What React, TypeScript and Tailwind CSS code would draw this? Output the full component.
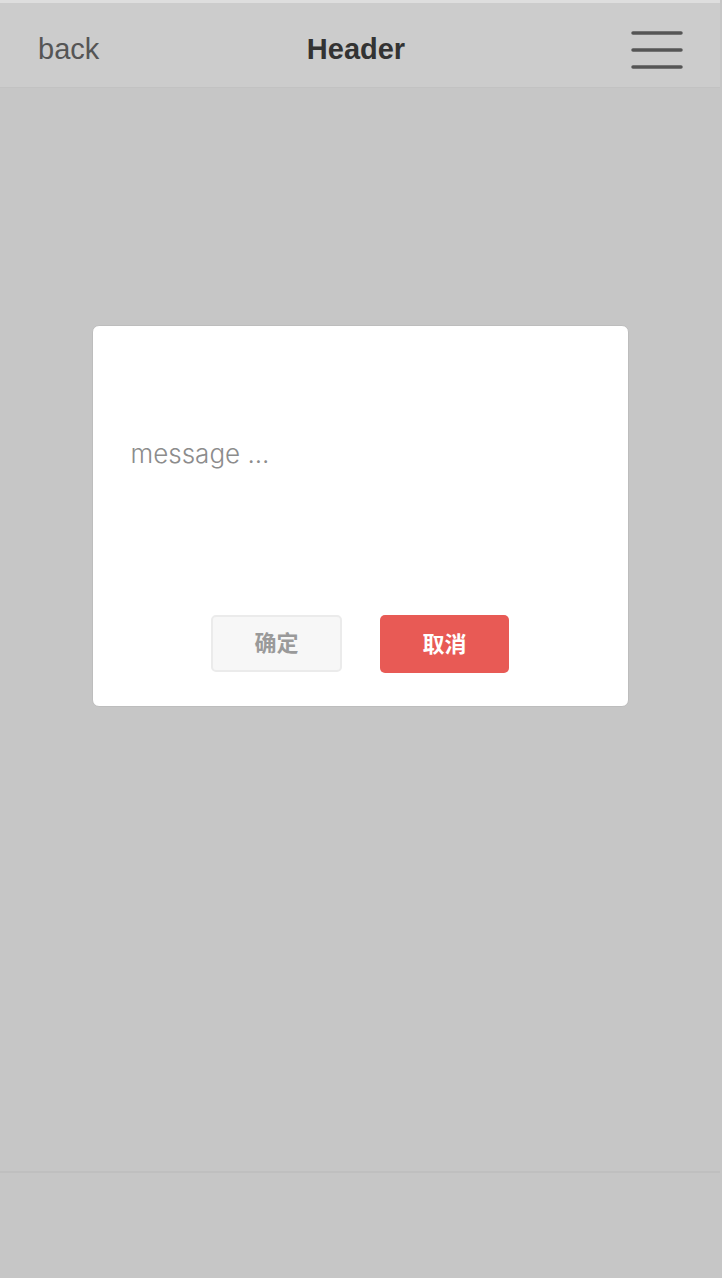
const sans = { fontFamily: '"Liberation Sans", Arial, "Noto Sans CJK SC", sans-serif' };

const MenuIcon = () => (
  <svg width="52" height="40" viewBox="0 0 52 40">
    <g stroke="#555" strokeWidth="3.5" strokeLinecap="round">
      <line x1="2" y1="3" x2="50" y2="3" />
      <line x1="2" y1="20" x2="50" y2="20" />
      <line x1="2" y1="37" x2="50" y2="37" />
    </g>
  </svg>
);

const Dialog = () => (
  <div className="mx-auto flex h-[382px] w-[537px] flex-col rounded-[7px] border border-[#bdbdbd] bg-white">
    <p
      className="pl-[38px] pt-[113px] text-[26px] font-light leading-[30px] text-[#8c8c8c]"
      style={{ fontFamily: '"Inter", "Liberation Sans", sans-serif' }}
    >
      message ...
    </p>
    <div className="mt-auto mb-[33px] flex justify-center gap-[38px]">
      <button
        type="button"
        className="h-[57px] w-[131px] rounded-[5px] border-2 border-[#ebebeb] bg-[#f7f7f7] text-[22px] font-bold text-[#9a9a9a]"
        style={sans}
      >
        确定
      </button>
      <button
        type="button"
        className="h-[58px] w-[129px] rounded-[5px] bg-[#e85a55] text-[22px] font-bold text-white"
        style={sans}
      >
        取消
      </button>
    </div>
  </div>
);

export default function App() {
  return (
    <div className="flex min-h-[1278px] flex-col bg-[#c6c6c6] pr-[2px]" style={sans}>
      <div className="h-[3px] bg-[#dedede]" />
      <header className="flex h-[85px] items-center justify-between border-b border-[#c2c2c2] bg-[#cccccc] pl-[38px] pr-[37px] pt-[10px]">
        <span className="w-[110px] text-[29px] text-[#555]">back</span>
        <h1 className="mr-[9px] text-[29px] font-bold text-[#333]">Header</h1>
        <div className="flex w-[110px] justify-end">
          <MenuIcon />
        </div>
      </header>
      <main className="flex-1 pt-[237px]">
        <Dialog />
      </main>
      <footer className="h-[107px] border-t-2 border-[#bfbfbf] bg-[#c6c6c6]" />
    </div>
  );
}
